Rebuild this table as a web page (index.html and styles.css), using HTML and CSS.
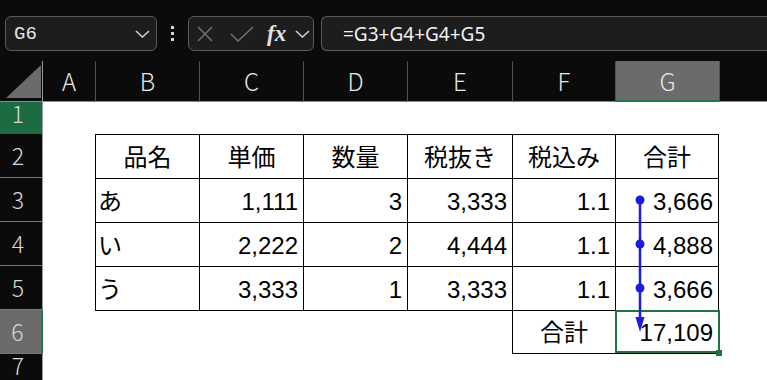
FILE: index.html
```html
<!DOCTYPE html>
<html>

<head>
    <title>Book1 - Excel</title>
    <meta charset="utf-8">
    <meta name="viewport" content="width=device-width, initial-scale=1.0">

    <link rel="stylesheet" href="styles.css">
</head>

<body>

    <header class="formelbar">
        <div class="navnefelt">
            <span class="celleRef">G6</span>
            <svg class="chevron" width="15" height="8" viewBox="0 0 15 8">
                <polyline points="1,1 7.5,7 14,1" />
            </svg>
        </div>

        <div class="prikker"><span></span><span></span><span></span></div>

        <div class="funktioner">
            <svg class="annuller" width="16" height="16" viewBox="0 0 16 16">
                <line x1="1" y1="1" x2="15" y2="15" />
                <line x1="15" y1="1" x2="1" y2="15" />
            </svg>
            <svg class="ok" width="24" height="16" viewBox="0 0 24 16">
                <polyline points="1,8 8,15 23,1" />
            </svg>
            <span class="fx">fx</span>
            <svg class="chevron" width="15" height="8" viewBox="0 0 15 8">
                <polyline points="1,1 7.5,7 14,1" />
            </svg>
        </div>

        <div class="formel">=G3+G4+G4+G5</div>
    </header>

    <main class="ark">

        <!-- kolonne overskrifter -->
        <div class="raekke kolonner">
            <div class="hjoerne"><div class="trekant"></div></div>
            <div class="kol forste">A</div>
            <div class="kol">B</div>
            <div class="kol">C</div>
            <div class="kol">D</div>
            <div class="kol">E</div>
            <div class="kol">F</div>
            <div class="kol valgt">G</div>
            <div class="kol"></div>
        </div>

        <div class="raekke r1">
            <div class="nr aktiv">1</div>
        </div>

        <div class="raekke">
            <div class="nr">2</div>
            <div class="c"></div>
            <div class="c t midt">品名</div>
            <div class="c t midt">単価</div>
            <div class="c t midt">数量</div>
            <div class="c t midt">税抜き</div>
            <div class="c t midt">税込み</div>
            <div class="c t end midt">合計</div>
        </div>

        <div class="raekke">
            <div class="nr">3</div>
            <div class="c"></div>
            <div class="c t navn">あ</div>
            <div class="c t tal">1,111</div>
            <div class="c t tal">3</div>
            <div class="c t tal">3,333</div>
            <div class="c t tal">1.1</div>
            <div class="c t end tal">3,666</div>
        </div>

        <div class="raekke">
            <div class="nr">4</div>
            <div class="c"></div>
            <div class="c t navn">い</div>
            <div class="c t tal">2,222</div>
            <div class="c t tal">2</div>
            <div class="c t tal">4,444</div>
            <div class="c t tal">1.1</div>
            <div class="c t end tal">4,888</div>
        </div>

        <div class="raekke">
            <div class="nr">5</div>
            <div class="c"></div>
            <div class="c t navn">う</div>
            <div class="c t tal">3,333</div>
            <div class="c t tal">1</div>
            <div class="c t tal">3,333</div>
            <div class="c t tal">1.1</div>
            <div class="c t end tal">3,666</div>
        </div>

        <div class="raekke">
            <div class="nr valgt">6</div>
            <div class="c"></div>
            <div class="c top"></div>
            <div class="c top"></div>
            <div class="c top"></div>
            <div class="c top"></div>
            <div class="c t bund midt">合計</div>
            <div class="c t end bund tal markeret">17,109</div>
        </div>

        <div class="raekke r7">
            <div class="nr">7</div>
        </div>

        <!-- spor-pil fra G3:G5 til G6 -->
        <svg class="spor" width="16" height="142" viewBox="0 0 16 142">
            <line x1="8" y1="8" x2="8" y2="128" />
            <circle cx="8" cy="8" r="4.5" />
            <circle cx="8" cy="52" r="4.5" />
            <circle cx="8" cy="96" r="4.5" />
            <polygon points="3.5,125 12.5,125 8,140" />
        </svg>

    </main>

</body></html>
```

FILE: styles.css
```css
* {
    box-sizing: border-box;
}

body {
    margin: 0;
    width: 767px;
    height: 380px;
    overflow: hidden;
    background-color: #0b0b0b;
    font-family: "Liberation Sans", "Noto Sans CJK JP", sans-serif;
}

/* formellinje */

.formelbar {
    height: 61px;
    display: flex;
    align-items: flex-start;
    padding-top: 16px;
    padding-left: 5px;
}

.formelbar > * {
    flex-shrink: 0;
}

.navnefelt,
.funktioner,
.formel {
    height: 35px;
    border: 1px solid #5a5a5a;
    border-radius: 6px;
    background-color: #1d1d1d;
    display: flex;
    align-items: center;
}

.navnefelt {
    width: 152px;
    justify-content: space-between;
    padding: 0 6px 0 8px;
}

.celleRef {
    font-family: "Liberation Mono", monospace;
    font-size: 19px;
    color: #e6e6e6;
}

.chevron polyline {
    fill: none;
    stroke: #cfcfcf;
    stroke-width: 1.6;
}

.prikker {
    width: 31px;
    height: 35px;
    display: flex;
    flex-direction: column;
    align-items: center;
    justify-content: center;
    gap: 3px;
}

.prikker span {
    width: 3px;
    height: 3px;
    background-color: #d4d4d4;
}

.funktioner {
    width: 126px;
    padding-left: 8px;
}

.annuller line,
.ok polyline {
    fill: none;
    stroke: #6e6e6e;
    stroke-width: 1.6;
}

.ok {
    margin-left: 17px;
}

.fx {
    margin-left: 13px;
    font-family: "Liberation Serif", serif;
    font-style: italic;
    font-weight: bold;
    font-size: 23px;
    color: #e2e2e2;
    line-height: 1;
}

.funktioner .chevron {
    margin-left: 9px;
}

/* formelfeltet fortsaetter ud over hoejre kant */
.formel {
    flex: 1;
    margin-left: 7px;
    border-right: none;
    border-radius: 6px 0 0 6px;
    padding-left: 21px;
    font-family: "Noto Sans", sans-serif;
    font-size: 19px;
    color: #f2f2f2;
}

/* regneark */

.ark {
    position: relative;
    height: 319px;
    background-color: #fff;
}

.raekke {
    display: grid;
    grid-template-columns: 43px 52px 104px 104px 104px 105px 103px 104px 1fr;
    height: 44px;
}

.kolonner {
    height: 41px;
    background-color: #0b0b0b;
}

.r1 {
    height: 32px;
}

.r7 {
    height: 26px;
}

.hjoerne {
    display: flex;
    align-items: flex-end;
    justify-content: flex-end;
    padding: 0 1px 3px 0;
    border-right: 1px solid #9a9a9a;
    border-bottom: 1px solid #8c8c8c;
}

.trekant {
    width: 35px;
    height: 33px;
    background-color: #6b6b6b;
    clip-path: polygon(100% 0, 100% 100%, 0 100%);
}

.kol {
    display: flex;
    align-items: center;
    justify-content: center;
    border-left: 1px solid #505050;
    border-bottom: 1px solid #8c8c8c;
    font-family: "Noto Sans CJK JP", sans-serif;
    font-weight: 300;
    font-size: 24px;
    line-height: 1;
    color: #e6e6e6;
}

.kol.forste {
    border-left: none;
}

.kol.valgt {
    background-color: #6b6b6b;
    border-bottom: 2px solid #1f7a4a;
}

.nr {
    display: flex;
    align-items: center;
    justify-content: center;
    padding-right: 6px;
    background-color: #0b0b0b;
    border-right: 1px solid #9a9a9a;
    border-bottom: 1px solid #7a7a7a;
    font-family: "Noto Sans CJK JP", sans-serif;
    font-weight: 300;
    font-size: 23px;
    line-height: 1;
    color: #d8d8d8;
}

.nr.aktiv {
    background-color: #1d6b41;
    padding-bottom: 10px;
}

.nr.valgt {
    background-color: #6b6b6b;
    border-right: 2px solid #1f7a4a;
}

.r7 .nr {
    border-bottom: none;
    align-items: flex-start;
    padding-top: 0;
}

/* celler i tabellen */

.c {
    display: flex;
    align-items: center;
    padding-top: 2px;
    font-size: 24px;
    line-height: 1;
    color: #000;
}

.t {
    border-top: 1px solid #000;
    border-left: 1px solid #000;
}

.t.end {
    border-right: 1px solid #000;
}

.t.bund {
    border-bottom: 1px solid #000;
}

.top {
    border-top: 1px solid #000;
}

.midt {
    justify-content: center;
}

.tal {
    justify-content: flex-end;
    padding-right: 5px;
}

.navn {
    padding-left: 2px;
}

.markeret {
    position: relative;
}

.markeret::after {
    content: "";
    position: absolute;
    top: -1px;
    left: -1px;
    right: -2px;
    bottom: 0;
    border: 2px solid #217346;
}

.markeret::before {
    content: "";
    position: absolute;
    right: -4px;
    bottom: -3px;
    width: 6px;
    height: 6px;
    background-color: #217346;
    z-index: 1;
}

.spor {
    position: absolute;
    left: 632px;
    top: 131px;
}

.spor line {
    stroke: #1c1cdc;
    stroke-width: 2.5;
}

.spor circle,
.spor polygon {
    fill: #1c1cdc;
}
```
